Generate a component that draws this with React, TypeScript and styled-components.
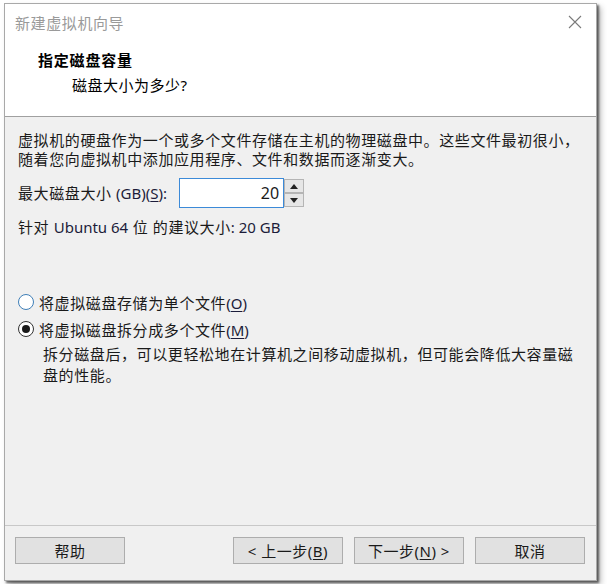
import React from "react";
import styled, { createGlobalStyle } from "styled-components";

const Global = createGlobalStyle`
  html, body { margin: 0; padding: 0; background: #ffffff; }
  body {
    font-family: "Noto Sans", "Noto Sans CJK SC", sans-serif;
    color: #1a1a1a;
  }
`;

const Page = styled.div`
  width: 607px;
  height: 584px;
  padding: 3px 0 0 4px;
  box-sizing: border-box;
`;

const Window = styled.div`
  width: 593px;
  height: 578px;
  box-sizing: border-box;
  border: 1px solid #a9a9a9;
  background: #f0f0f0;
  display: flex;
  flex-direction: column;
  box-shadow: 2px 2px 2px rgba(0, 0, 0, 0.55), 4px 4px 6px rgba(0, 0, 0, 0.25);
`;

const TitleBar = styled.div`
  height: 36px;
  background: #fff;
  display: flex;
  align-items: center;
  justify-content: space-between;
  padding: 0 14px 0 10px;
`;

const TitleText = styled.span`
  font-size: 15px;
  letter-spacing: 0.6px;
  color: #9a9a9a;
`;

const Close = styled.svg`
  width: 14px;
  height: 14px;
`;

const Header = styled.div`
  height: 77px;
  background: #fff;
  border-bottom: 1px solid #a0a0a0;
  padding: 10px 0 0 33px;
  box-sizing: border-box;
`;

const Heading = styled.div`
  font-size: 15px;
  font-weight: 700;
  letter-spacing: 0.8px;
  line-height: 20px;
  color: #000;
`;

const SubHeading = styled.div`
  font-size: 15px;
  letter-spacing: 0.5px;
  line-height: 20px;
  margin: 5px 0 0 34px;
  color: #000;
`;

const Content = styled.div`
  flex: 1;
  padding: 14px 0 0 13px;
  font-size: 15px;
  letter-spacing: 0.6px;
  color: #1a1a1a;
`;

const Para = styled.div`
  line-height: 19px;
`;

const Latin = styled.span`
  letter-spacing: 0;
  color: #1c1c3a;
`;

const SizeRow = styled.div`
  display: flex;
  align-items: center;
  margin-top: 9px;
  height: 30px;
`;

const Label = styled.span`
  line-height: 19px;
  margin-right: 12px;
`;

const Spin = styled.div`
  display: flex;
  height: 30px;
`;

const Input = styled.div`
  width: 105px;
  height: 30px;
  box-sizing: border-box;
  border: 1px solid #3c8ad8;
  background: #fff;
  display: flex;
  align-items: center;
  justify-content: flex-end;
  padding-right: 4px;
  font-size: 16px;
  letter-spacing: 0;
`;

const SpinCol = styled.div`
  width: 20px;
  display: flex;
  flex-direction: column;
  padding: 1px 0;
`;

const SpinBtn = styled.div`
  height: 14px;
  box-sizing: border-box;
  border: 1px solid #b5b5b5;
  background: #e6e6e6;
  display: flex;
  align-items: center;
  justify-content: center;
`;

const Hint = styled.div`
  margin-top: 10px;
  line-height: 19px;
`;

const RadioGroup = styled.div`
  margin-top: 54px;
  display: flex;
  flex-direction: column;
  gap: 5px;
`;

const RadioRow = styled.div`
  display: flex;
  align-items: center;
  height: 22px;
  gap: 5px;
`;

const RadioCircle = styled.span<{ $checked?: boolean }>`
  width: 16px;
  height: 16px;
  box-sizing: border-box;
  border-radius: 50%;
  border: 1px solid ${(p) => (p.$checked ? "#333" : "#3f7fb8")};
  background: #fff;
  display: flex;
  align-items: center;
  justify-content: center;
  &::after {
    content: "";
    display: ${(p) => (p.$checked ? "block" : "none")};
    width: 8px;
    height: 8px;
    border-radius: 50%;
    background: #1a1a1a;
  }
`;

const Desc = styled.div`
  margin: 4px 0 0 25px;
  line-height: 21px;
  padding-right: 20px;
`;

const U = styled.span`
  text-decoration: underline;
  text-underline-offset: 2px;
`;

const Footer = styled.div`
  height: 55px;
  border-top: 1px solid #c8c8c8;
  box-sizing: border-box;
  display: flex;
  align-items: flex-start;
  padding: 11px 11px 0 10px;
`;

const Spacer = styled.div`
  flex: 1;
`;

const Buttons = styled.div`
  display: flex;
  gap: 11px;
`;

const Button = styled.button`
  width: 110px;
  height: 27px;
  box-sizing: border-box;
  border: 1px solid #adadad;
  background: #e1e1e1;
  font-family: "Noto Sans", "Noto Sans CJK SC", sans-serif;
  font-size: 15px;
  letter-spacing: 0.5px;
  color: #1a1a1a;
  padding: 0;
  display: flex;
  align-items: center;
  justify-content: center;
`;

export default function App() {
  return (
    <>
      <Global />
      <Page>
        <Window>
          <TitleBar>
            <TitleText>新建虚拟机向导</TitleText>
            <Close viewBox="0 0 14 14">
              <path d="M1 1 L13 13 M13 1 L1 13" stroke="#7a7a7a" strokeWidth="1.1" />
            </Close>
          </TitleBar>
          <Header>
            <Heading>指定磁盘容量</Heading>
            <SubHeading>磁盘大小为多少?</SubHeading>
          </Header>
          <Content>
            <Para>
              虚拟机的硬盘作为一个或多个文件存储在主机的物理磁盘中。这些文件最初很小，
              <br />
              随着您向虚拟机中添加应用程序、文件和数据而逐渐变大。
            </Para>
            <SizeRow>
              <Label>
                最大磁盘大小 <Latin>(GB)(<U>S</U>):</Latin>
              </Label>
              <Spin>
                <Input>20</Input>
                <SpinCol>
                  <SpinBtn>
                    <svg width="8" height="5" viewBox="0 0 8 5">
                      <path d="M0 5 L4 0 L8 5 Z" fill="#222" />
                    </svg>
                  </SpinBtn>
                  <SpinBtn>
                    <svg width="8" height="5" viewBox="0 0 8 5">
                      <path d="M0 0 L8 0 L4 5 Z" fill="#222" />
                    </svg>
                  </SpinBtn>
                </SpinCol>
              </Spin>
            </SizeRow>
            <Hint>
              针对 <Latin>Ubuntu 64</Latin> 位 的建议大小<Latin>: 20 GB</Latin>
            </Hint>
            <RadioGroup>
              <RadioRow>
                <RadioCircle />
                <span>
                  将虚拟磁盘存储为单个文件<Latin>(<U>O</U>)</Latin>
                </span>
              </RadioRow>
              <RadioRow>
                <RadioCircle $checked />
                <span>
                  将虚拟磁盘拆分成多个文件<Latin>(<U>M</U>)</Latin>
                </span>
              </RadioRow>
            </RadioGroup>
            <Desc>
              拆分磁盘后，可以更轻松地在计算机之间移动虚拟机，但可能会降低大容量磁
              <br />
              盘的性能。
            </Desc>
          </Content>
          <Footer>
            <Button>帮助</Button>
            <Spacer />
            <Buttons>
              <Button>
                &lt; 上一步(<U>B</U>)
              </Button>
              <Button>
                下一步(<U>N</U>) &gt;
              </Button>
              <Button>取消</Button>
            </Buttons>
          </Footer>
        </Window>
      </Page>
    </>
  );
}
